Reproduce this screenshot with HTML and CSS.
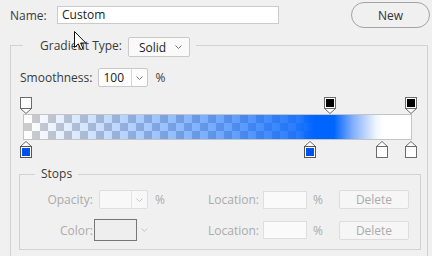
FILE: index.html
```html
<!DOCTYPE html>
<html>
<head>
<meta charset="utf-8">
<link rel="stylesheet" href="styles.css">
</head>
<body>
<div class="dlg">
  <div class="top">
    <span class="lbl name-lbl">Name:</span>
    <div class="field name-field">Custom</div>
    <button class="new-btn">New</button>
  </div>

  <fieldset class="grad">
    <legend class="grad-legend">
      <span class="lbl">Gradient Type:</span>
      <div class="select"><span>Solid</span><svg class="chev" width="7" height="4" viewBox="0 0 7 4"><polyline points="0.5,0.5 3.5,3.5 6.5,0.5" fill="none" stroke="#777" stroke-width="1"/></svg></div>
    </legend>
    <div class="grad-body">
      <div class="smooth">
        <span class="lbl">Smoothness:</span>
        <div class="combo">
          <span class="combo-val">100</span>
          <span class="combo-drop"><svg width="7" height="4" viewBox="0 0 7 4"><polyline points="0.5,0.5 3.5,3.5 6.5,0.5" fill="none" stroke="#777" stroke-width="1"/></svg></span>
        </div>
        <span class="lbl pct">%</span>
      </div>

      <div class="editor">
        <div class="bar"></div>
        <!-- opacity stops (top) -->
        <svg class="stop" style="left:1px;top:0" width="12" height="17" viewBox="0 0 12 17"><polygon points="0.5,11.5 11.5,11.5 6,16.5" fill="#fff" stroke="#6b6b6b"/><rect x="0.5" y="0.5" width="11" height="11" fill="#fff" stroke="#6b6b6b"/></svg>
        <svg class="stop" style="left:305px;top:0" width="12" height="17" viewBox="0 0 12 17"><polygon points="0.5,11.5 11.5,11.5 6,16.5" fill="#fff" stroke="#6b6b6b"/><rect x="0.5" y="0.5" width="11" height="11" fill="#fff" stroke="#6b6b6b"/><rect x="2" y="2" width="8" height="8" fill="#000"/></svg>
        <svg class="stop" style="left:386px;top:0" width="12" height="17" viewBox="0 0 12 17"><polygon points="0.5,11.5 11.5,11.5 6,16.5" fill="#fff" stroke="#6b6b6b"/><rect x="0.5" y="0.5" width="11" height="11" fill="#fff" stroke="#6b6b6b"/><rect x="2" y="2" width="8" height="8" fill="#000"/></svg>
        <!-- color stops (bottom) -->
        <svg class="stop" style="left:1px;top:44px" width="12" height="17" viewBox="0 0 12 17"><polygon points="0.5,5.5 11.5,5.5 6,0.5" fill="#fff" stroke="#6b6b6b"/><rect x="0.5" y="5.5" width="11" height="11" fill="#fff" stroke="#555"/><rect x="2" y="7" width="8" height="8" fill="#0050f0"/></svg>
        <svg class="stop" style="left:285px;top:44px" width="12" height="17" viewBox="0 0 12 17"><polygon points="0.5,5.5 11.5,5.5 6,0.5" fill="#fff" stroke="#6b6b6b"/><rect x="0.5" y="5.5" width="11" height="11" fill="#fff" stroke="#555"/><rect x="2" y="7" width="8" height="8" fill="#0050f0"/></svg>
        <svg class="stop" style="left:357px;top:44px" width="12" height="17" viewBox="0 0 12 17"><polygon points="0.5,5.5 11.5,5.5 6,0.5" fill="#fff" stroke="#6b6b6b"/><rect x="0.5" y="5.5" width="11" height="11" fill="#fff" stroke="#6b6b6b"/></svg>
        <svg class="stop" style="left:386px;top:44px" width="12" height="17" viewBox="0 0 12 17"><polygon points="0.5,5.5 11.5,5.5 6,0.5" fill="#fff" stroke="#6b6b6b"/><rect x="0.5" y="5.5" width="11" height="11" fill="#fff" stroke="#6b6b6b"/></svg>
      </div>

      <fieldset class="stopsbox">
        <legend class="stops-legend">Stops</legend>
        <div class="stops-grid">
          <span class="dis rlbl">Opacity:</span>
          <div class="combo dcombo"><span class="combo-val"></span><span class="combo-drop"><svg width="7" height="4" viewBox="0 0 7 4"><polyline points="0.5,0.5 3.5,3.5 6.5,0.5" fill="none" stroke="#c4c4c4" stroke-width="1"/></svg></span></div>
          <span class="dis pct2">%</span>
          <span class="dis">Location:</span>
          <div class="dinput"></div>
          <span class="dis pct3">%</span>
          <div class="del">Delete</div>

          <span class="dis rlbl">Color:</span>
          <div class="swatch-wrap"><div class="swatch"></div><svg width="7" height="4" viewBox="0 0 7 4"><polyline points="0.5,0.5 3.5,3.5 6.5,0.5" fill="none" stroke="#c4c4c4" stroke-width="1"/></svg></div>
          <span></span>
          <span class="dis">Location:</span>
          <div class="dinput"></div>
          <span class="dis pct3">%</span>
          <div class="del">Delete</div>
        </div>
      </fieldset>
    </div>
  </fieldset>

  <svg class="cursor" width="13" height="20" viewBox="0 0 13 20"><path d="M0.5,0.5 L0.5,16.5 L4.3,12.8 L6.8,18.6 L9,17.6 L6.6,12 L11.8,12 Z" fill="#fff" stroke="#111" stroke-width="1" stroke-linejoin="round"/></svg>
</div>
</body>
</html>
```
FILE: styles.css
```css
* { box-sizing: border-box; }
html, body {
  margin: 0;
  padding: 0;
  width: 432px;
  height: 256px;
  overflow: hidden;
  background: #f0f0f0;
}
body {
  font-family: "Open Sans", "Noto Sans", sans-serif;
  font-size: 12px;
  color: #3a3a3a;
}
.dlg {
  position: relative;
  width: 432px;
  height: 256px;
}
.lbl { color: #3a3a3a; white-space: nowrap; }

.top {
  display: flex;
  align-items: center;
  height: 28px;
  padding: 2px 2px 0 10px;
}
.name-lbl { width: 47px; }
.name-field {
  width: 222px;
  height: 18px;
  background: #fff;
  border: 1px solid #cacaca;
  padding-left: 4px;
  line-height: 16px;
  color: #222;
}
.new-btn {
  margin-left: auto;
  width: 79px;
  height: 26px;
  border: 1px solid #a3a3a3;
  border-radius: 13px;
  background: #f0f0f0;
  font: inherit;
  font-size: 12px;
  color: #333;
  padding: 0;
}

.grad {
  margin: 9px 4px 0 10px;
  padding: 0;
  border: 1px solid #d2d2d2;
  min-width: 0;
}
.grad-legend {
  margin-left: 12px;
  padding: 0 6px 0 17px;
  height: 16px;
  display: flex;
  align-items: flex-start;
}
.select {
  margin-left: 6px;
  width: 62px;
  height: 20px;
  flex: none;
  background: #fafafa;
  border: 1px solid #c9c9c9;
  border-radius: 2px;
  display: flex;
  align-items: center;
  justify-content: space-between;
  padding: 0 7px 0 10px;
  color: #222;
}
.chev { display: block; }

.grad-body {
  padding: 15px 6px 10px 8px;
}
.smooth {
  display: flex;
  align-items: center;
  height: 19px;
  margin-left: 1px;
}
.combo {
  margin-left: 6px;
  width: 50px;
  height: 19px;
  display: flex;
  background: #fdfdfd;
  border: 1px solid #c9c9c9;
  border-radius: 2px;
}
.combo-val {
  flex: 1;
  padding-left: 4px;
  line-height: 17px;
  color: #222;
  border-right: 1px solid #d6d6d6;
}
.combo-drop {
  width: 15px;
  display: flex;
  align-items: center;
  justify-content: center;
}
.combo-drop svg { display: block; }
.pct { margin-left: 7px; }

.editor {
  position: relative;
  height: 61px;
  margin-top: 10px;
}
.bar {
  position: absolute;
  left: 4px;
  top: 17px;
  width: 389px;
  height: 26px;
  border: 1px solid #c4c4c4;
  background-image:
    linear-gradient(to right,
      rgba(0, 100, 255, 0) 0.6%,
      rgba(0, 100, 255, 0.55) 50%,
      rgba(0, 100, 255, 0.85) 71%,
      rgb(0, 100, 255) 75%,
      rgb(0, 100, 255) 80%,
      rgb(130, 175, 255) 85%,
      rgb(240, 246, 255) 91%,
      #fff 93%,
      #fff 100%),
    conic-gradient(#cccccc 25%, #ffffff 0 50%, #cccccc 0 75%, #ffffff 0);
  background-size: 100% 100%, 16px 16px;
}
.stop {
  position: absolute;
  display: block;
}

.stopsbox {
  margin: 8px 0 0 0;
  padding: 0;
  border: 1px solid #d2d2d2;
  min-width: 0;
}
.stops-legend {
  margin-left: 15px;
  padding: 0 6px;
  height: 16px;
  line-height: 16px;
  color: #3a3a3a;
}
.stops-grid {
  display: grid;
  grid-template-columns: 73px 55px 60px 55px 44px 32px 70px;
  grid-template-rows: 19px 22px;
  row-gap: 10px;
  align-items: center;
  padding: 8px 0 8px 0;
}
.dis { color: #ababab; white-space: nowrap; }
.rlbl { text-align: right; }
.dcombo {
  margin-left: 6px;
  width: 49px;
  background: #f8f8f8;
  border-color: #dedede;
}
.dcombo .combo-val { border-right-color: #e2e2e2; }
.pct2 { padding-left: 7px; }
.pct3 { padding-left: 6px; }
.dinput {
  height: 18px;
  background: #fafafa;
  border: 1px solid #dedede;
}
.del {
  height: 19px;
  border: 1px solid #dddddd;
  border-radius: 2px;
  background: #f6f6f6;
  color: #ababab;
  text-align: center;
  line-height: 17px;
}
.swatch-wrap {
  display: flex;
  align-items: center;
  margin-left: 1px;
}
.swatch {
  width: 44px;
  height: 22px;
  border: 1px solid #777;
  background: #eeeeee;
  margin-right: 4px;
}
.swatch-wrap svg { display: block; }

.cursor {
  position: absolute;
  left: 74px;
  top: 31px;
}
```
